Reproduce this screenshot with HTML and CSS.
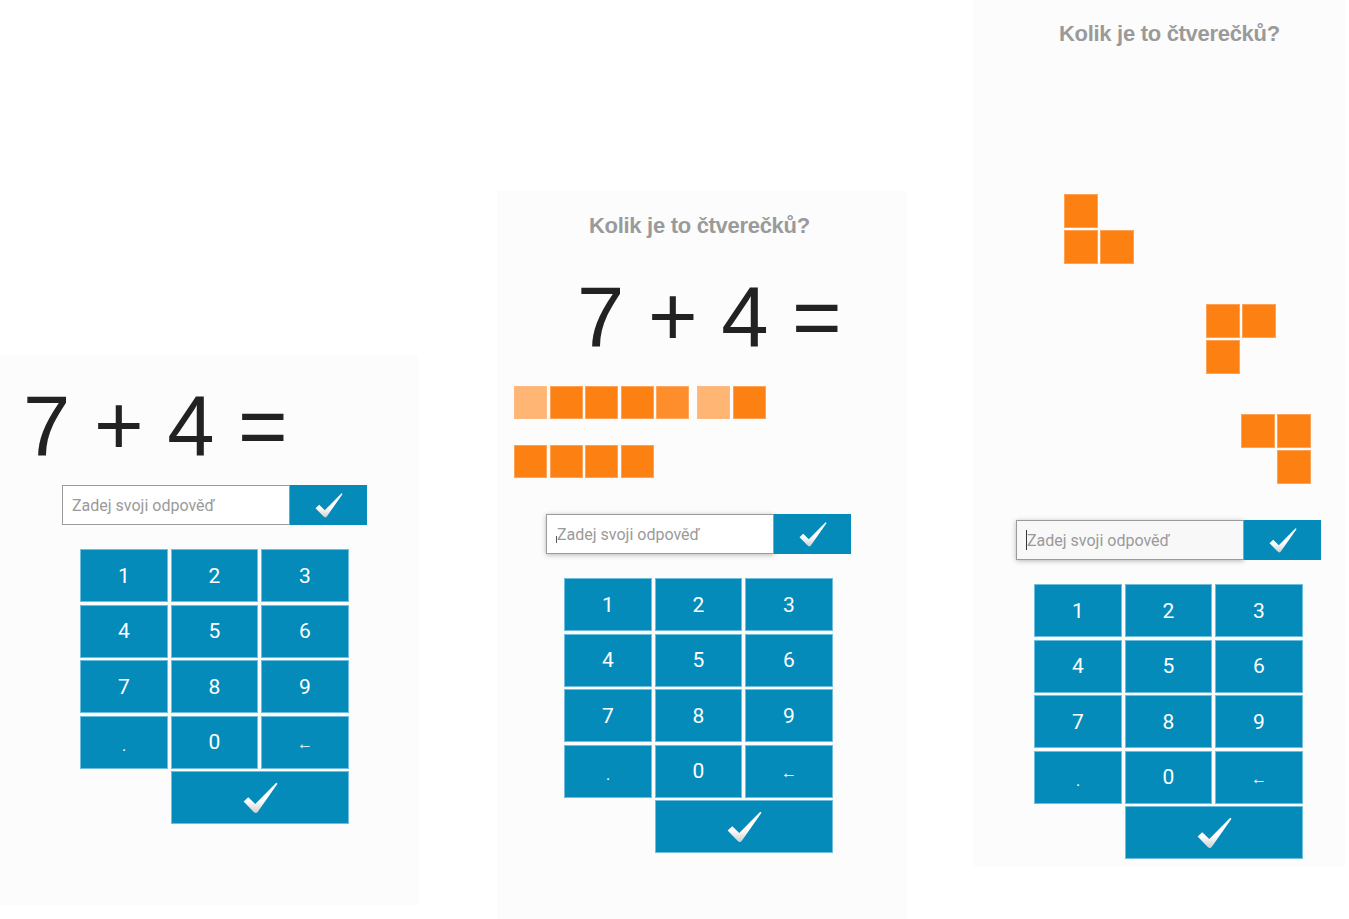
FILE: index.html
```html
<!DOCTYPE html>
<html lang="cs">
<head>
<meta charset="utf-8">
<title>Kolik je to čtverečků?</title>
<link rel="stylesheet" href="styles.css">
</head>
<body>
<svg width="0" height="0" class="defs">
  <defs>
    <linearGradient id="chk" x1="0" y1="0" x2="0" y2="1">
      <stop offset="0" stop-color="#ffffff"/>
      <stop offset="0.6" stop-color="#ffffff"/>
      <stop offset="1" stop-color="#cfcfcf"/>
    </linearGradient>
    <symbol id="check" viewBox="0 0 28 25">
      <path d="M0.5 15.2 L4.2 11.8 L9.8 17.2 L26.6 0.2 L27.6 1 L12 23.2 Q10.4 25.4 8.6 23.6 Z" fill="url(#chk)"/>
    </symbol>
  </defs>
</svg>
<div class="stage">

  <section class="panel p1">
    <div class="eq eq1">7 + 4 =</div>
    <div class="answer a1">
      <div class="field"><span class="ph">Zadej svoji odpověď</span></div>
      <div class="ok"><svg class="chk-s"><use href="#check"/></svg></div>
    </div>
    <div class="keypad k1">
      <div class="key">1</div><div class="key">2</div><div class="key">3</div>
      <div class="key">4</div><div class="key">5</div><div class="key">6</div>
      <div class="key">7</div><div class="key">8</div><div class="key">9</div>
      <div class="key dot">.</div><div class="key">0</div><div class="key arrow">←</div>
      <div class="key submit"><svg class="chk-b"><use href="#check"/></svg></div>
    </div>
  </section>

  <section class="panel p2">
    <div class="title t2">Kolik je to čtverečků?</div>
    <div class="eq eq2">7 + 4 =</div>
    <div class="sqrow r1">
      <div class="grp">
        <span class="sq light"></span><span class="sq"></span><span class="sq"></span><span class="sq"></span><span class="sq mid"></span>
      </div>
      <div class="grp">
        <span class="sq light"></span><span class="sq"></span>
      </div>
    </div>
    <div class="sqrow r2">
      <div class="grp">
        <span class="sq"></span><span class="sq"></span><span class="sq"></span><span class="sq"></span>
      </div>
    </div>
    <div class="answer a2 shadowed">
      <div class="field"><span class="caret short"></span><span class="ph">Zadej svoji odpověď</span></div>
      <div class="ok"><svg class="chk-s"><use href="#check"/></svg></div>
    </div>
    <div class="keypad k2">
      <div class="key">1</div><div class="key">2</div><div class="key">3</div>
      <div class="key">4</div><div class="key">5</div><div class="key">6</div>
      <div class="key">7</div><div class="key">8</div><div class="key">9</div>
      <div class="key dot">.</div><div class="key">0</div><div class="key arrow">←</div>
      <div class="key submit"><svg class="chk-b"><use href="#check"/></svg></div>
    </div>
  </section>

  <section class="panel p3">
    <div class="title t3">Kolik je to čtverečků?</div>
    <div class="shapes">
      <div class="shape s1"><span class="sq c11"></span><span class="sq c21"></span><span class="sq c22"></span></div>
      <div class="shape s2"><span class="sq c11"></span><span class="sq c12"></span><span class="sq c21"></span></div>
      <div class="shape s3"><span class="sq c11"></span><span class="sq c12"></span><span class="sq c22"></span></div>
    </div>
    <div class="answer a3 shadowed">
      <div class="field grey"><span class="caret"></span><span class="ph">Zadej svoji odpověď</span></div>
      <div class="ok"><svg class="chk-s"><use href="#check"/></svg></div>
    </div>
    <div class="keypad k3">
      <div class="key">1</div><div class="key">2</div><div class="key">3</div>
      <div class="key">4</div><div class="key">5</div><div class="key">6</div>
      <div class="key">7</div><div class="key">8</div><div class="key">9</div>
      <div class="key dot">.</div><div class="key">0</div><div class="key arrow">←</div>
      <div class="key submit"><svg class="chk-b"><use href="#check"/></svg></div>
    </div>
  </section>

</div>
</body>
</html>
```
FILE: styles.css
```css
html, body {
  margin: 0;
  padding: 0;
  background: #ffffff;
  height: 100%;
  overflow: hidden;
}
.defs {
  position: absolute;
  width: 0;
  height: 0;
}
.stage {
  display: flex;
  align-items: flex-start;
  width: 1349px;
  height: 919px;
  overflow: hidden;
}
.panel {
  background: #fcfcfc;
  display: flex;
  flex-direction: column;
  align-items: flex-start;
  flex: none;
}
.p1 { width: 418px; height: 550px; margin-top: 355px; }
.p2 { width: 409px; height: 728px; margin-top: 191px; margin-left: 79px; }
.p3 { width: 371px; height: 867px; margin-top: 0; margin-left: 68px; }

.title {
  font-family: "Liberation Sans", Arial, sans-serif;
  font-weight: bold;
  font-size: 22px;
  line-height: 26px;
  color: #9a9a9a;
  white-space: nowrap;
  letter-spacing: -0.3px;
}
.t2 { margin-top: 22px; margin-left: 92px; }
.t3 { margin-top: 21px; margin-left: 85px; }

.eq {
  font-family: "Liberation Sans", Arial, sans-serif;
  font-size: 85px;
  line-height: 85px;
  color: #222222;
  white-space: nowrap;
}
.eq1 { margin-top: 28px; margin-left: 23px; }
.eq2 { margin-top: 35px; margin-left: 80px; }

/* squares */
.sq {
  display: block;
  width: 33px;
  height: 33px;
  background: #fd8012;
  box-shadow: inset 0 0 0 1px rgba(255, 190, 140, 0.55);
}
.sq.light { background: #ffb574; }
.sq.mid { background: #fe8e2c; }
.sqrow {
  display: flex;
  gap: 8px;
  margin-left: 17px;
}
.sqrow .grp {
  display: flex;
  gap: 2.5px;
}
.r1 { margin-top: 27px; }
.r2 { margin-top: 26px; }

.shapes {
  display: flex;
  flex-direction: column;
  gap: 40px;
  margin-top: 147px;
}
.shape {
  display: grid;
  grid-template-columns: 34px 34px;
  grid-template-rows: 34px 34px;
  gap: 2px;
}
.shape .sq { width: 34px; height: 34px; }
.c11 { grid-column: 1; grid-row: 1; }
.c12 { grid-column: 2; grid-row: 1; }
.c21 { grid-column: 1; grid-row: 2; }
.c22 { grid-column: 2; grid-row: 2; }
.s1 { margin-left: 90px; }
.s2 { margin-left: 232px; }
.s3 { margin-left: 267px; }

/* answer row */
.answer {
  display: flex;
  height: 40px;
}
.a1 { margin-top: 17px; margin-left: 62px; }
.a2 { margin-top: 36px; margin-left: 49px; }
.a3 { margin-top: 36px; margin-left: 42px; }
.field {
  width: 228px;
  height: 40px;
  box-sizing: border-box;
  border: 1px solid #9b9b9b;
  background: #ffffff;
  display: flex;
  align-items: center;
  padding-left: 9px;
}
.field.grey { background: #f8f8f8; }
.shadowed .field { box-shadow: 0 1px 5px rgba(0, 0, 0, 0.28); }
.ph {
  font-family: Roboto, "Liberation Sans", sans-serif;
  font-size: 16px;
  color: #9a9a9a;
  white-space: nowrap;
}
.caret {
  width: 1px;
  height: 20px;
  background: #333333;
}
.caret.short {
  height: 7px;
  align-self: flex-end;
  margin-bottom: 10px;
  background: #555555;
}
.ok {
  width: 77px;
  height: 40px;
  background: #058bba;
  display: flex;
  align-items: center;
  justify-content: center;
}
.chk-s { width: 28px; height: 25px; }
.chk-b { width: 35px; height: 32px; }

/* keypad */
.keypad {
  display: grid;
  grid-template-columns: 88px 87px 88px;
  grid-auto-rows: 53px;
  column-gap: 3px;
  row-gap: 2.5px;
}
.k1 { margin-top: 24px; margin-left: 80px; }
.k2 { margin-top: 24px; margin-left: 67px; }
.k3 { margin-top: 24px; margin-left: 60px; }
.key {
  background: #058bba;
  box-shadow: inset 0 0 0 1px #6fbedd;
  color: #ffffff;
  font-family: Roboto, "Liberation Sans", sans-serif;
  font-size: 21px;
  display: flex;
  align-items: center;
  justify-content: center;
}
.key.arrow { font-size: 16px; padding-top: 2px; }
.key.dot { font-size: 16px; padding-top: 6px; }
.key.submit {
  grid-column: 2 / span 2;
}
```
